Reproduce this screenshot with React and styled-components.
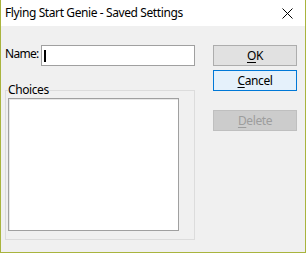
import React from 'react'
import styled, { createGlobalStyle } from 'styled-components'

const GlobalStyle = createGlobalStyle`
  html, body {
    margin: 0;
    padding: 0;
    background: #ffffff;
  }
  * { box-sizing: border-box; }
`

const Window = styled.div`
  width: 306px;
  height: 253px;
  display: flex;
  flex-direction: column;
  border: 1px solid #a9b43e;
  border-top: none;
  background: #f0f0f0;
  font-family: "Noto Sans", "Open Sans", sans-serif;
  font-size: 12px;
  letter-spacing: -0.4px;
  color: #000;
`

const TitleBar = styled.div`
  height: 26px;
  background: #fff;
  display: flex;
  align-items: center;
  padding-left: 4px;
  .title {
    flex: 1;
    font-size: 12px;
    line-height: 16px;
    margin-top: -1px;
  }
`

const CloseBtn = styled.div`
  width: 46px;
  height: 26px;
  display: flex;
  align-items: center;
  justify-content: center;
  margin-right: -1px;
  svg { display: block; margin-left: 8px; }
`

const Body = styled.div`
  flex: 1;
  display: flex;
  padding: 19px 8px 13px 4px;
`

const LeftCol = styled.div`
  width: 190px;
  display: flex;
  flex-direction: column;
`

const NameRow = styled.div`
  display: flex;
  align-items: center;
  height: 21px;
  label {
    width: 36px;
    line-height: 16px;
    margin-top: -4px;
    letter-spacing: -0.7px;
  }
`

const TextBox = styled.div`
  width: 154px;
  height: 21px;
  background: #fff;
  border: 1px solid #a0a0a0;
  position: relative;
`

const Caret = styled.span`
  position: absolute;
  left: 2px;
  top: 4px;
  width: 2px;
  height: 12px;
  background: #000;
`

const Group = styled.fieldset`
  margin: 17px 0 0 0;
  padding: 0 0 8px 2px;
  flex: 1;
  border: 1px solid #dcdcdc;
  display: flex;
  legend {
    padding: 0;
    margin-left: 0;
    line-height: 14px;
    font-size: 12px;
  }
`

const ListBox = styled.div`
  width: 171px;
  height: 133px;
  margin-top: 1px;
  background: #fff;
  border: 1px solid #a0a0a0;
  box-shadow: inset 1px 1px 0 #e8e8e8;
`

const RightCol = styled.div`
  margin-left: auto;
  width: 84px;
  display: flex;
  flex-direction: column;
`

const Button = styled.div`
  height: 21px;
  display: flex;
  align-items: center;
  justify-content: center;
  font-size: 12px;
  line-height: 16px;
  border: 1px solid ${p => (p.$focus ? '#0078d7' : p.$disabled ? '#bfbfbf' : '#adadad')};
  background: ${p => (p.$focus ? '#e5f1fb' : p.$disabled ? '#cccccc' : '#e1e1e1')};
  color: ${p => (p.$disabled ? '#9d9d9d' : '#000')};
  margin-top: ${p => p.$gap || 0}px;
  u { text-decoration-thickness: 1px; text-underline-offset: 2px; }
`

export default function App() {
  return (
    <>
      <GlobalStyle />
      <Window>
        <TitleBar>
          <span className="title">Flying Start Genie - Saved Settings</span>
          <CloseBtn>
            <svg width="11" height="11" viewBox="0 0 11 11">
              <path d="M0.5 0.5 L10.5 10.5 M10.5 0.5 L0.5 10.5" stroke="#000" strokeWidth="1" />
            </svg>
          </CloseBtn>
        </TitleBar>
        <Body>
          <LeftCol>
            <NameRow>
              <label>Name:</label>
              <TextBox>
                <Caret />
              </TextBox>
            </NameRow>
            <Group>
              <legend>Choices</legend>
              <ListBox />
            </Group>
          </LeftCol>
          <RightCol>
            <Button><span><u>O</u>K</span></Button>
            <Button $focus $gap={4}><span><u>C</u>ancel</span></Button>
            <Button $disabled $gap={19}><span><u>D</u>elete</span></Button>
          </RightCol>
        </Body>
      </Window>
    </>
  )
}
